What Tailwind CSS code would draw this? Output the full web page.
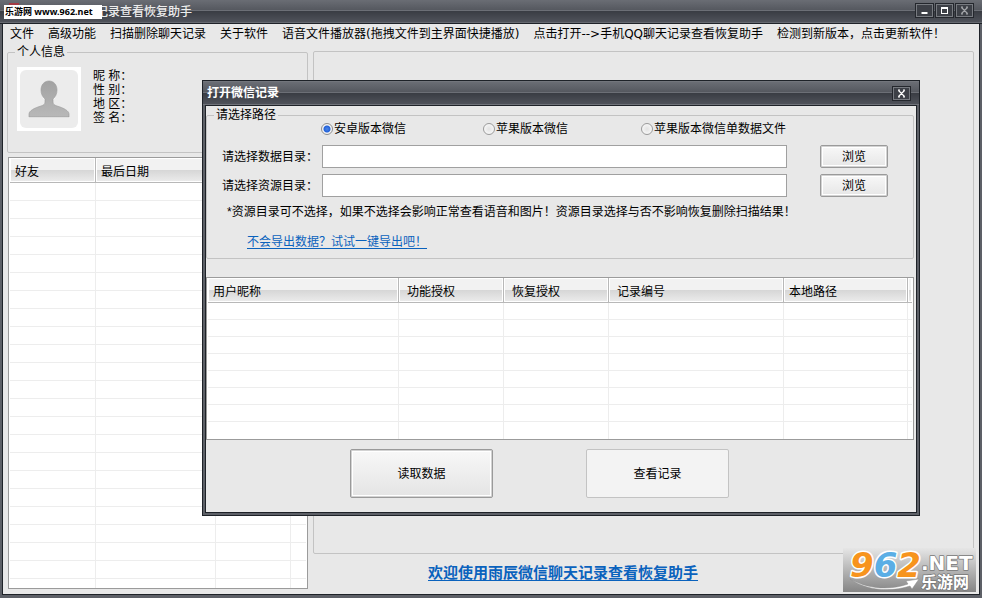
<!DOCTYPE html>
<html lang="zh-CN">
<head>
<meta charset="utf-8">
<title>微信聊天记录查看恢复助手</title>
<script src="https://cdn.jsdelivr.net/npm/@tailwindcss/browser@4"></script>
</head>
<body class="relative flex h-screen flex-col overflow-hidden bg-[#e8e8e8] font-['Liberation_Sans','Noto_Sans_CJK_SC',sans-serif] text-[12px] leading-[14px] text-black">

<header class="flex h-6 shrink-0 items-center justify-between border-b border-[#1e2228] bg-[linear-gradient(to_bottom,#6a6d74_0,#55585f_10px,#6c6f76_10px,#6c6f76_11px,#393c43_11px,#4f525a_22px,#666970_22px)] pr-2 pl-24">
  <h1 class="font-medium text-[#ececec]">记录查看恢复助手</h1>
  <div class="flex gap-px pb-[3px]">
    <button aria-label="最小化" class="flex h-[15px] w-[19px] items-center justify-center border border-[#24272d] bg-[#3d4047] inset-ring inset-ring-[#777a80]">
      <svg class="size-[9px]" viewBox="0 0 9 9"><path d="M1.500 6h6v2h-6z" fill="#fff"/></svg>
    </button>
    <button aria-label="最大化" class="flex h-[15px] w-[19px] items-center justify-center border border-[#24272d] bg-[#3d4047] inset-ring inset-ring-[#777a80]">
      <svg class="size-[9px]" viewBox="0 0 9 9"><path d="M1 1h7v7H1zM2 3v4h5V3z" fill="#fff" fill-rule="evenodd"/></svg>
    </button>
    <button aria-label="关闭" class="flex h-[15px] w-[19px] items-center justify-center border border-[#24272d] bg-[#3d4047] inset-ring inset-ring-[#777a80]">
      <svg class="size-[9px]" viewBox="0 0 9 9"><path d="M1.500 1.500l6 6M7.500 1.500l-6 6M1 1h2M6 1h2M1 8h2M6 8h2" stroke="#a4a6aa" stroke-width="1.200"/></svg>
    </button>
  </div>
</header>

<div class="flex min-h-0 flex-1 flex-col border-x-2 border-b-3 border-[#5d6067]">
 <div class="flex min-h-0 flex-1 flex-col border-x border-b border-[#1e2228]">
  <nav class="flex shrink-0 gap-[14px] pt-[3px] pb-1 pl-[7px] font-['DejaVu_Sans','Noto_Sans_CJK_SC',sans-serif] whitespace-nowrap">
    <a href="#">文件</a><a href="#">高级功能</a><a href="#">扫描删除聊天记录</a><a href="#">关于软件</a><a href="#">语音文件播放器(拖拽文件到主界面快捷播放)</a><a href="#">点击打开--&gt;手机QQ聊天记录查看恢复助手</a><a href="#">检测到新版本，点击更新软件！</a>
  </nav>

  <main class="flex min-h-0 flex-1 gap-[5px] pr-[5px] pb-[5px] pl-1">
    <section class="flex w-[301px] shrink-0 flex-col gap-1">
      <fieldset class="h-[108px] rounded-xs border border-[#c3c3c3] px-[9px]">
        <legend class="ml-[-2px] px-[2px]">个人信息</legend>
        <div class="flex gap-3 pt-2">
          <svg class="size-16" viewBox="0 0 64 64">
            <defs><linearGradient id="person" x1="0" y1="0" x2="0" y2="1"><stop offset="0" stop-color="#a2a2a2"/><stop offset="1" stop-color="#b8b8b8"/></linearGradient></defs>
            <path fill="#fff" d="M0 0h64v64H0z"/><rect x="3" y="3" width="58" height="58" rx="6" fill="#ececec"/>
            <path transform="translate(0 1)" fill="#fff" d="M32 14c-5 0-8 4-8 9 0 4 1.500 7 4 9v3c0 2-1 3-4 4-7 2-12 5-12 8v3h40v-3c0-3-5-6-12-8-3-1-4-2-4-4v-3c2.500-2 4-5 4-9 0-5-3-9-8-9z"/>
            <path fill="url(#person)" stroke="#989898" stroke-width=".6" d="M32 14c-5 0-8 4-8 9 0 4 1.500 7 4 9v3c0 2-1 3-4 4-7 2-12 5-12 8v3h40v-3c0-3-5-6-12-8-3-1-4-2-4-4v-3c2.500-2 4-5 4-9 0-5-3-9-8-9z"/>
          </svg>
          <ul class="pt-[2px]"><li>昵 称：</li><li>性 别：</li><li>地 区：</li><li>签 名：</li></ul>
        </div>
      </fieldset>
      <div class="ml-px min-h-0 flex-1 overflow-hidden border border-[#9b9b9b] bg-white px-px">
        <table class="w-full table-fixed border-separate border-spacing-0 [&_td]:h-[18px] [&_td]:border-r [&_td]:border-b [&_td]:border-[#ededed] [&_td]:p-0 [&_td:last-child]:border-r-0">
          <colgroup><col class="w-[86px]"><col class="w-[120px]"><col class="w-[75px]"><col></colgroup>
          <thead>
            <tr class="[&>th]:h-[25px] [&>th]:border-r [&>th]:border-b [&>th]:border-[#b8b8b8] [&>th]:bg-[linear-gradient(to_bottom,#f2f2f2_0,#f2f2f2_50%,#d6d6d6_50%,#ececec_100%)] [&>th]:p-0 [&>th]:pl-[5px] [&>th]:pt-1 [&>th]:text-left [&>th]:font-normal [&>th]:inset-ring [&>th]:inset-ring-white [&>th:last-child]:border-r-0">
              <th scope="col">好友</th><th scope="col">最后日期</th><th></th><th></th>
            </tr>
          </thead>
          <tbody data-rows="23" data-columns="4"></tbody>
        </table>
      </div>
    </section>

    <section class="flex min-w-0 flex-1 flex-col pt-[6px]">
      <div class="min-h-0 flex-1 rounded-xs border border-[#c3c3c3]"></div>
      <p class="h-[35px] pt-[9px] pl-[115px]"><a href="#" class="text-[15px] leading-5 font-bold text-[#0a62bd] underline underline-offset-2">欢迎使用雨辰微信聊天记录查看恢复助手</a></p>
    </section>
  </main>
 </div>
</div>

<div class="absolute top-[5px] left-1 flex h-[14px] w-[98px] items-center bg-white pl-px font-['Noto_Sans','Noto_Sans_CJK_SC',sans-serif] text-[9px] font-bold whitespace-nowrap">
  <span>乐游网 www.962.net</span>
</div>
<div class="absolute top-[3px] left-[9px] h-[2px] w-[10px] bg-[#a33a45]"></div>

<div role="dialog" aria-labelledby="dialog-title" class="absolute top-20 right-[62px] left-[202px] border border-[#1e2228] bg-[#5d6067]">
  <header class="flex h-6 items-center justify-between bg-[linear-gradient(to_bottom,#7b7e84_0,#6a6d74_1px,#55585f_11px,#6c6f76_11px,#6c6f76_12px,#393c43_12px,#4f525a_23px,#70737a_23px)] pr-2 pl-1">
    <h2 id="dialog-title" class="font-bold text-white">打开微信记录</h2>
    <button aria-label="关闭" class="flex h-[15px] w-[19px] items-center justify-center border border-[#24272d] bg-[#3d4047] inset-ring inset-ring-[#777a80]">
      <svg class="size-[9px]" viewBox="0 0 9 9"><path d="M1.500 1.500l6 6M7.500 1.500l-6 6M1 1h2M6 1h2M1 8h2M6 8h2" stroke="#fff" stroke-width="1.200"/></svg>
    </button>
  </header>
  <div class="mx-[2px] mb-[2px] border border-[#1e2228] bg-[#e8e8e8] pr-[2px] pb-[14px]">
    <fieldset class="mt-[2px] h-[151px] rounded-xs border border-[#c3c3c3]">
      <legend class="ml-[7px] px-[2px]">请选择路径</legend>
      <div class="flex pl-[114px] whitespace-nowrap">
        <label class="flex w-[162px] items-center gap-px"><input type="radio" name="version" checked class="size-3 appearance-none rounded-full border border-[#8d8d8d] bg-[#f4f4f4] checked:bg-[radial-gradient(circle,#4b86e8_0,#2462d8_3px,#f4f4f4_4px)]">安卓版本微信</label>
        <label class="flex w-[158px] items-center gap-px"><input type="radio" name="version" class="size-3 appearance-none rounded-full border border-[#9a9a9a] bg-[radial-gradient(circle,#e2e2e2_0,#f6f6f6_5px)]">苹果版本微信</label>
        <label class="flex items-center gap-px"><input type="radio" name="version" class="size-3 appearance-none rounded-full border border-[#9a9a9a] bg-[radial-gradient(circle,#e2e2e2_0,#f6f6f6_5px)]">苹果版本微信单数据文件</label>
      </div>
      <div class="mt-[9px] grid grid-cols-[100px_minmax(0,1fr)_68px] items-center gap-y-[6px] pr-[25px] pl-[15px]">
        <label for="data-path">请选择数据目录：</label>
        <input id="data-path" type="text" class="mr-[33px] h-[23px] border border-[#a0a0a0] bg-white px-1">
        <button class="h-[23px] rounded-xs border border-[#9a9a9a] bg-linear-to-b from-[#f8f8f8] to-[#e6e6e6] inset-ring-2 inset-ring-[#d2d2d2]"><span class="m-px flex h-[19px] items-center justify-center border border-white">浏览</span></button>
        <label for="resource-path">请选择资源目录：</label>
        <input id="resource-path" type="text" class="mr-[33px] h-[23px] border border-[#a0a0a0] bg-white px-1">
        <button class="h-[23px] rounded-xs border border-[#9a9a9a] bg-linear-to-b from-[#f8f8f8] to-[#e6e6e6] inset-ring-2 inset-ring-[#d2d2d2]"><span class="m-px flex h-[19px] items-center justify-center border border-white">浏览</span></button>
      </div>
      <p class="mt-2 pl-5 whitespace-nowrap">*资源目录可不选择，如果不选择会影响正常查看语音和图片！资源目录选择与否不影响恢复删除扫描结果！</p>
      <p class="mt-4 pl-10"><a href="#" class="text-[#0a62bd] underline underline-offset-2">不会导出数据？试试一键导出吧！</a></p>
    </fieldset>

    <div class="mt-[18px] overflow-hidden border border-[#9b9b9b] bg-white px-px">
      <table class="w-full table-fixed border-separate border-spacing-0 [&_td]:h-[17px] [&_td]:border-r [&_td]:border-b [&_td]:border-[#ededed] [&_td]:p-0 [&_td:last-child]:border-r-0 [&_tbody_tr:last-child_td]:border-b-0">
        <colgroup><col class="w-[191px]"><col class="w-[105px]"><col class="w-[105px]"><col class="w-[175px]"><col><col class="w-1"></colgroup>
        <thead>
          <tr class="[&>th]:h-[25px] [&>th]:border-r [&>th]:border-b [&>th]:border-[#b8b8b8] [&>th]:bg-[linear-gradient(to_bottom,#f2f2f2_0,#f2f2f2_50%,#d6d6d6_50%,#ececec_100%)] [&>th]:p-0 [&>th]:pt-1 [&>th]:text-left [&>th]:font-normal [&>th]:inset-ring [&>th]:inset-ring-white [&>th:last-child]:border-r-0">
            <th scope="col"><span class="pl-[5px]">用户昵称</span></th><th scope="col"><span class="pl-2">功能授权</span></th><th scope="col"><span class="pl-2">恢复授权</span></th><th scope="col"><span class="pl-2">记录编号</span></th><th scope="col"><span class="pl-[5px]">本地路径</span></th><th></th>
          </tr>
        </thead>
        <tbody data-rows="8" data-columns="6"></tbody>
      </table>
    </div>

    <div class="mt-[9px] flex gap-[93px] pl-[144px]">
      <button class="h-[49px] w-[143px] rounded-xs border border-[#9a9a9a] bg-linear-to-b from-[#f8f8f8] to-[#e4e4e4] p-px inset-ring-2 inset-ring-[#d2d2d2]"><span class="flex h-full items-center justify-center border border-white">读取数据</span></button>
      <button class="h-[49px] w-[143px] rounded-xs border border-[#c3c3c3] bg-[#f3f3f3]">查看记录</button>
    </div>
  </div>
</div>

<svg class="absolute right-[6px] bottom-[6px] h-14 w-[133px]" viewBox="0 -12 133 56" role="img" aria-label="962.NET 乐游网">
  <defs><linearGradient id="plate" x1="0" y1="0" x2="0" y2="1"><stop offset="0" stop-color="#e6e6e6"/><stop offset="1" stop-color="#858585"/></linearGradient></defs>
  <path fill="url(#plate)" d="M0 0h133v44H0z"/>
  <text x="7" y="29" font-family="DejaVu Sans, sans-serif" font-weight="bold" font-style="italic" font-size="34" stroke="#fff" stroke-width="3" paint-order="stroke" stroke-linejoin="round"><tspan fill="#f7941d">9</tspan><tspan fill="#5aaee5">6</tspan><tspan fill="#f7941d">2</tspan></text>
  <path d="M7 31c20 11 41 11 58 5l-2-3 13-2-7 10-2-3C48 44 24 43 7 31z" fill="#fff" stroke="#8c8c8c" stroke-width=".5"/>
  <g fill="#fff" stroke="#777" stroke-width="1.500" paint-order="stroke" stroke-linejoin="round">
    <text x="78" y="22" font-family="DejaVu Sans, sans-serif" font-weight="bold" font-size="20">.NET</text>
    <text x="78" y="40" font-family="Noto Sans CJK SC, sans-serif" font-weight="bold" font-size="16">乐游网</text>
  </g>
</svg>

<script>
  // Fill each list with its empty grid rows.
  document.querySelectorAll('tbody[data-rows]').forEach(body => {
    for (let r = 0; r < Number(body.dataset.rows); r++) {
      const row = body.insertRow();
      for (let c = 0; c < Number(body.dataset.columns); c++) row.insertCell();
    }
  });
</script>
</body>
</html>
